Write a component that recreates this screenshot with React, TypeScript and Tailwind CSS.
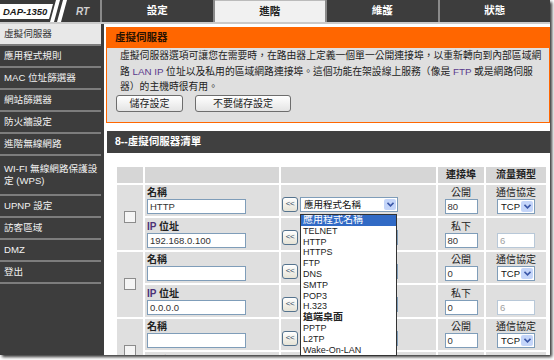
const tabs = [
  { label: "設定", active: false },
  { label: "進階", active: true },
  { label: "維護", active: false },
  { label: "狀態", active: false },
];

const menu = [
  "虛擬伺服器",
  "應用程式規則",
  "MAC 位址篩選器",
  "網站篩選器",
  "防火牆設定",
  "進階無線網路",
  "WPS",
  "UPNP 設定",
  "訪客區域",
  "DMZ",
  "登出",
];

const entries = [
  { name: "HTTP", ip: "192.168.0.100", pub: "80", priv: "80" },
  { name: "", ip: "0.0.0.0", pub: "0", priv: "0" },
  { name: "", ip: "", pub: "0", priv: "0" },
];

const options = [
  "應用程式名稱",
  "TELNET",
  "HTTP",
  "HTTPS",
  "FTP",
  "DNS",
  "SMTP",
  "POP3",
  "H.323",
  "遠端桌面",
  "PPTP",
  "L2TP",
  "Wake-On-LAN",
];

function Logo() {
  return (
    <div className="relative h-[22px] w-[100px] shrink-0 bg-[#3a3a3a]">
      <svg className="absolute left-0 top-0" width="100" height="22" viewBox="0 0 100 22">
        <polygon points="0,4 53,4 49,19 0,19" fill="#ffffff" />
        <polygon points="56,0 60,0 54,22 50,22" fill="#ffffff" />
        <polygon points="63,0 67,0 61,22 57,22" fill="#ffffff" />
      </svg>
      <span className="absolute left-[3px] top-[5px] text-[9.5px] font-bold italic leading-[13px] text-[#1a1a1a]">
        DAP-1350
      </span>
      <span className="absolute left-[76px] top-[5px] text-[10px] font-bold italic leading-[13px] text-[#d0d0d0]">
        RT
      </span>
    </div>
  );
}

function ArrowBtn() {
  return (
    <span className="flex h-[15px] w-[16px] shrink-0 items-center justify-center rounded-[3px] border border-[#55738e] bg-gradient-to-b from-white to-[#e6e3d6] text-[8px] leading-none tracking-[-0.5px] text-[#2f4a63]">
      &lt;&lt;
    </span>
  );
}

function FakeSelect({ value, width }: { value: string; width: string }) {
  return (
    <span className={`flex h-[15px] items-center border border-[#7f9db9] bg-white ${width}`}>
      <span className="flex-1 overflow-hidden whitespace-nowrap pl-[3px] text-[9.5px] leading-[13px] text-[#111]">
        {value}
      </span>
      <span className="mr-[1px] flex h-[11px] w-[12px] shrink-0 items-center justify-center rounded-[2px] bg-[#c4d5f9]">
        <svg width="7" height="5" viewBox="0 0 7 5">
          <path d="M0.5 0.8 L3.5 3.8 L6.5 0.8" fill="none" stroke="#3b57a8" strokeWidth="1.6" />
        </svg>
      </span>
    </span>
  );
}

function Input({ value, width, muted }: { value: string; width: string; muted?: boolean }) {
  return (
    <span
      className={`block h-[15px] border bg-white pl-[2px] text-[9.5px] leading-[13px] ${width} ${
        muted ? "border-[#b8c8d8] text-[#a0a0a0]" : "border-[#7f9db9] text-[#333]"
      }`}
    >
      {value}
    </span>
  );
}

export default function App() {
  return (
    <div className="relative h-[360px] w-[554px] overflow-hidden bg-white font-['Liberation_Sans','Noto_Sans_CJK_TC',sans-serif]">
      <div className="flex h-[355px] w-[550px] flex-col overflow-hidden bg-[#3d3d3d] shadow-[2px_2px_3px_rgba(0,0,0,0.8)]">
        {/* top bar */}
        <div className="flex h-[22px] shrink-0 bg-[#8a8a8a]">
          <Logo />
          <div className="ml-[2px] flex flex-1 gap-[2px]">
            {tabs.map((t) => (
              <div
                key={t.label}
                className={`flex flex-1 items-center justify-center text-[10.5px] font-bold ${
                  t.active
                    ? "border-t border-[#bbbbbb] bg-[#f1f1f1] text-[#222]"
                    : "bg-[#3d3d3d] text-white"
                }`}
              >
                {t.label}
              </div>
            ))}
          </div>
        </div>
        <div className="h-[2px] shrink-0 bg-[#cacaca]" />

        <div className="flex min-h-0 flex-1">
          {/* sidebar */}
          <div className="flex w-[101px] shrink-0 flex-col">
            {menu.map((m, i) => (
              <div key={m} className="flex flex-col">
                <div
                  className={`flex items-center whitespace-nowrap pl-[4px] text-[9.6px] leading-[12px] ${
                    m === "WPS" ? "h-[38px]" : "h-[20px]"
                  } ${i === 0 ? "bg-[#e8e8e8] text-[#333]" : "bg-[#3d3d3d] text-[#f2f2f2]"}`}
                >
                  {m === "WPS" ? (
                    <span>
                      WI-FI 無線網路保護設
                      <br />
                      定 (WPS)
                    </span>
                  ) : (
                    m
                  )}
                </div>
                <div className="h-[2px] bg-[#7d7d7d]" />
              </div>
            ))}
          </div>

          {/* main */}
          <div className="ml-[3px] flex-1 bg-white pl-[2px] pt-[3px]">
            <div className="border border-[#ff6600]">
              <div className="flex h-[20px] items-center bg-[#ff6600] pl-[8px] text-[10.5px] font-bold text-[#2a1200]">
                虛擬伺服器
              </div>
              <div className="bg-[#dfdfdf] pb-[10px]">
                <p className="whitespace-nowrap pl-[13px] text-[9.8px] leading-[15.5px] text-[#222]">
                  虛擬伺服器選項可讓您在需要時，在路由器上定義一個單一公開連接埠，以重新轉向到內部區域網
                  <br />
                  路 <span className="text-[#5a3a8c]">LAN IP</span> 位址以及私用的區域網路連接埠。這個功能在架設線上服務（像是{" "}
                  <span className="text-[#5a3a8c]">FTP</span> 或是網路伺服
                  <br />
                  器）的主機時很有用。
                </p>
                <div className="flex gap-[12px] pl-[9px]">
                  <button className="flex h-[17px] w-[67px] items-center justify-center rounded-[3px] border border-[#6d6d6d] bg-gradient-to-b from-white to-[#e4e4e4] text-[10px] text-[#222]">
                    儲存設定
                  </button>
                  <button className="flex h-[17px] w-[96px] items-center justify-center rounded-[3px] border border-[#6d6d6d] bg-gradient-to-b from-white to-[#e4e4e4] text-[10px] text-[#222]">
                    不要儲存設定
                  </button>
                </div>
              </div>
            </div>

            <div className="ml-[1px] mt-[8px]">
              <div className="flex h-[22px] items-center bg-[#404040] pl-[8px] text-[10.5px] font-bold text-white">
                8--虛擬伺服器清單
              </div>
              <table className="ml-[8px] mt-[12px] border-separate border-spacing-[2px] text-[10px] text-[#222]">
                <tbody>
                  <tr className="h-[16px] bg-[#d6d6d6]">
                    <td className="w-[26px]" />
                    <td className="w-[134px]" />
                    <td className="w-[155px]" />
                    <td className="w-[46px] text-center font-bold leading-[12px]">連接埠</td>
                    <td className="w-[60px] text-center font-bold leading-[12px]">流量類型</td>
                  </tr>
                  {entries.map((e, i) => (
                    <Entry key={i} {...e} />
                  ))}
                </tbody>
              </table>
            </div>
          </div>
        </div>
      </div>

      {/* open application-name dropdown */}
      <div className="absolute left-[300px] top-[214px] w-[97px] border border-[#333] bg-white">
        {options.map((o, i) => (
          <div
            key={o}
            className={`h-[10.8px] overflow-hidden whitespace-nowrap pl-[2px] leading-[10.8px] ${
              i === 0 ? "bg-[#316ac5] text-[10px] text-white" : "text-[9px] text-[#222]"
            } ${o === "遠端桌面" ? "text-[10px] font-bold text-[#111]" : ""}`}
          >
            {o}
          </div>
        ))}
      </div>
    </div>
  );
}

function Entry({ name, ip, pub, priv }: { name: string; ip: string; pub: string; priv: string }) {
  return (
    <>
      <tr className="bg-[#dfdfdf]">
        <td rowSpan={2} className="align-middle">
          <span className="mx-auto block h-[12px] w-[12px] border border-[#8c8c8c] bg-[#f5f5f5]" />
        </td>
        <td className="h-[31px] pl-[2px] pt-[2px] align-top">
          <div className="font-bold leading-[12px]">名稱</div>
          <Input value={name} width="w-[99px]" />
        </td>
        <td className="h-[31px] pl-[1px] pt-[12px] align-top">
          <div className="flex gap-[2px]">
            <ArrowBtn />
            {/* the open list covers these selects, so they stay blank */}
            <FakeSelect value={name === "HTTP" ? "應用程式名稱" : ""} width="w-[98px]" />
          </div>
        </td>
        <td className="h-[31px] pt-[2px] align-top">
          <div className="text-center leading-[12px]">公開</div>
          <div className="flex justify-center">
            <Input value={pub} width="w-[33px]" />
          </div>
        </td>
        <td className="h-[31px] pt-[2px] align-top">
          <div className="text-center leading-[12px]">通信協定</div>
          <div className="flex justify-center">
            <FakeSelect value="TCP" width="w-[38px]" />
          </div>
        </td>
      </tr>
      <tr className="bg-[#dfdfdf]">
        <td className="h-[32px] pl-[2px] pt-[3px] align-top">
          <div className="font-bold leading-[12px]">
            <span className="text-[#4b3278]">IP</span> 位址
          </div>
          <Input value={ip} width="w-[99px]" />
        </td>
        <td className="h-[32px] pl-[1px] pt-[12px] align-top">
          <div className="flex gap-[2px]">
            <ArrowBtn />
            <FakeSelect value="" width="w-[98px]" />
          </div>
        </td>
        <td className="h-[32px] pt-[3px] align-top">
          <div className="text-center leading-[12px]">私下</div>
          <div className="flex justify-center">
            <Input value={priv} width="w-[33px]" />
          </div>
        </td>
        <td className="h-[32px] pt-[15px] align-top">
          <div className="flex justify-center">
            <Input value="6" width="w-[38px]" muted />
          </div>
        </td>
      </tr>
    </>
  );
}
